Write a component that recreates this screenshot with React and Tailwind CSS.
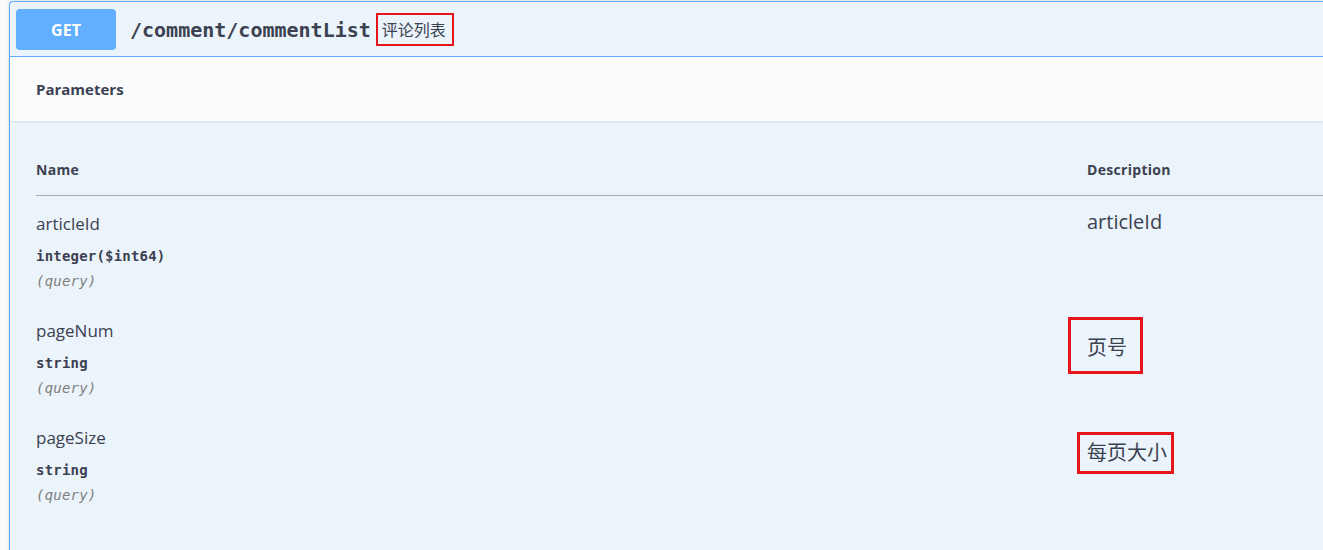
const params = [
  { name: 'articleId', type: 'integer($int64)', desc: 'articleId', pad: 'pt-[16px]' },
  { name: 'pageNum', type: 'string', desc: '页号', pad: 'pt-[30px]', box: 'mt-[-2px] ml-[-19px] h-[57px] pl-[16px] pr-[13px] pt-[4px]' },
  { name: 'pageSize', type: 'string', desc: '每页大小', pad: 'pt-[30px]', box: 'mt-[6px] ml-[-10px] h-[42px] pl-[7px] pr-[4px]' },
];

const sans = { fontFamily: '"Open Sans", "Noto Sans CJK SC", sans-serif' };
const mono = { fontFamily: '"DejaVu Sans Mono", monospace' };

const App = () => {
  return (
    <div className="h-[550px] w-[1323px] overflow-hidden bg-[#f9f9f9] pl-[9px] pt-[1px]" style={sans}>
      <div className="h-[600px] rounded-tl-[4px] border border-r-0 border-[#61affe] bg-[#ebf3fb] shadow-[0_0_3px_rgba(0,0,0,0.19)]">
        {/* summary */}
        <div className="flex h-[55px] items-center border-b border-[#61affe] pl-[6px] pt-[1px]">
          <span className="flex h-[41px] w-[100px] items-center justify-center rounded-[4px] bg-[#61affe] text-[16px] font-bold text-white">
            GET
          </span>
          <span className="ml-[14px] text-[20px] font-semibold text-[#3b4151]" style={mono}>
            /comment/commentList
          </span>
          <span className="ml-[5px] flex h-[33px] items-center border-2 border-[#e8141c] pl-[4px] pr-[6px] text-[16px] text-[#3b4151]">
            评论列表
          </span>
        </div>

        {/* parameters header */}
        <div className="flex h-[64px] items-center bg-[#fbfcfe] pl-[26px] shadow-[0_1px_2px_rgba(0,0,0,0.1)]">
          <h4 className="text-[15px] font-bold text-[#3b4151]">Parameters</h4>
        </div>

        {/* table */}
        <div className="pl-[26px] pt-[39px]">
          <div className="flex border-b border-[#a5aab3] pb-[15px] text-[14px] leading-[20px] font-bold tracking-[0.3px] text-[#3b4151]">
            <div className="w-[1051px]">Name</div>
            <div>Description</div>
          </div>

          {params.map((p) => (
            <div key={p.name} className={`flex ${p.pad}`}>
              <div className="w-[1051px]">
                <div className="text-[17px] leading-[24px] text-[#3b4151]">{p.name}</div>
                <div className="mt-[12px] text-[14px] font-semibold leading-[16px] tracking-[0.2px] text-[#3b4151]" style={mono}>
                  {p.type}
                </div>
                <div className="mt-[9px] text-[14px] italic leading-[16px] tracking-[0.2px] text-[#808080]" style={mono}>
                  (query)
                </div>
              </div>
              <div className="text-[#3b4151]">
                {p.box ? (
                  <span className={`inline-flex items-center border-[3px] border-[#e8141c] text-[20px] ${p.box}`}>
                    {p.desc}
                  </span>
                ) : (
                  <div className="mt-[-2px] text-[20px] leading-[24px]">{p.desc}</div>
                )}
              </div>
            </div>
          ))}
        </div>
      </div>
    </div>
  );
};

export default App;
